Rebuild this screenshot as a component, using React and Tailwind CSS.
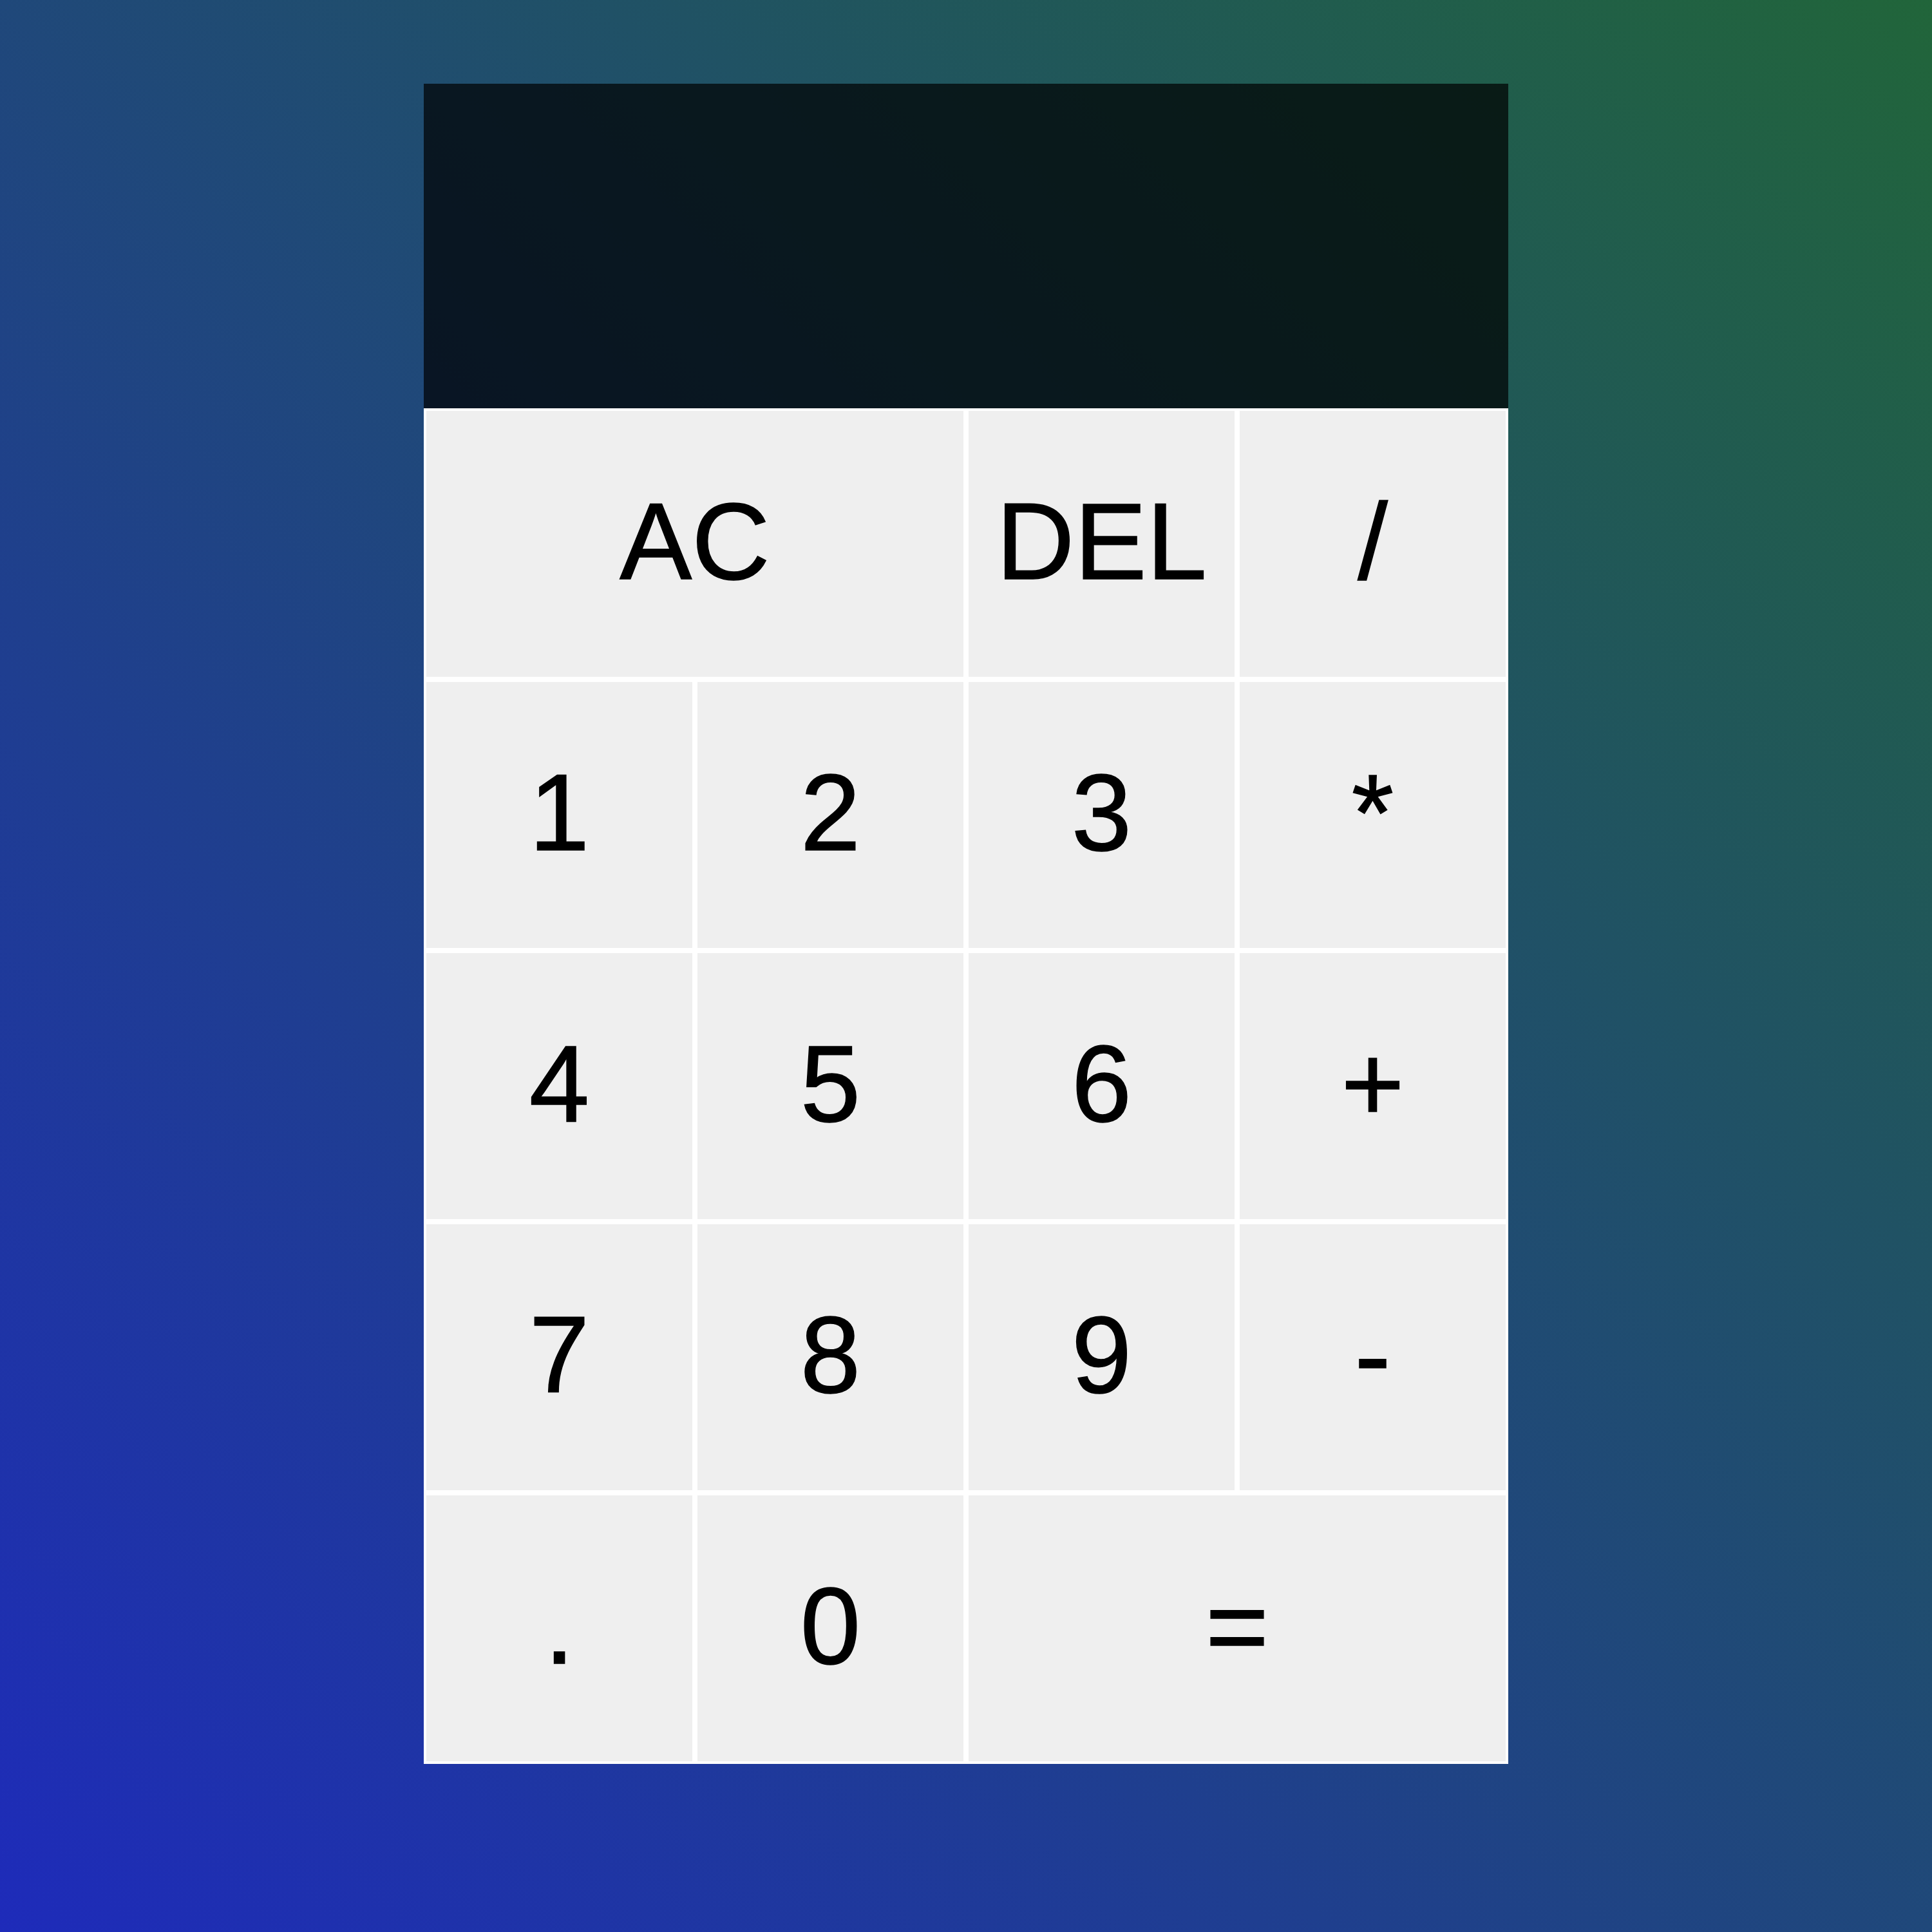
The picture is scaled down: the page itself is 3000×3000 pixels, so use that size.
const KEYS = [
  { label: 'AC', span: true },
  { label: 'DEL' },
  { label: '/' },
  { label: '1' },
  { label: '2' },
  { label: '3' },
  { label: '*' },
  { label: '4' },
  { label: '5' },
  { label: '6' },
  { label: '+' },
  { label: '7' },
  { label: '8' },
  { label: '9' },
  { label: '-' },
  { label: '.' },
  { label: '0' },
  { label: '=', span: true },
]

export default function App() {
  return (
    <div
      className="w-[3000px] h-[3000px] bg-linear-to-tr/srgb from-[#1e2bba] to-[#21653a] flex justify-center pt-[130px]"
      style={{ fontFamily: '"Liberation Sans", Arial, sans-serif' }}
    >
      <div className="grid grid-cols-[repeat(4,421px)] grid-rows-[504px_repeat(5,421px)] self-start">
        {/* Output screen */}
        <div className="col-span-4 bg-black/70" />

        {KEYS.map(k => (
          <button
            key={k.label}
            className={`${k.span ? 'col-span-2' : ''} bg-[#efefef] border-4 border-white text-black text-[168px] leading-none flex items-center justify-center pb-[8px] cursor-pointer [-webkit-text-stroke:1.5px_black]`}
          >
            {k.label}
          </button>
        ))}
      </div>
    </div>
  )
}
